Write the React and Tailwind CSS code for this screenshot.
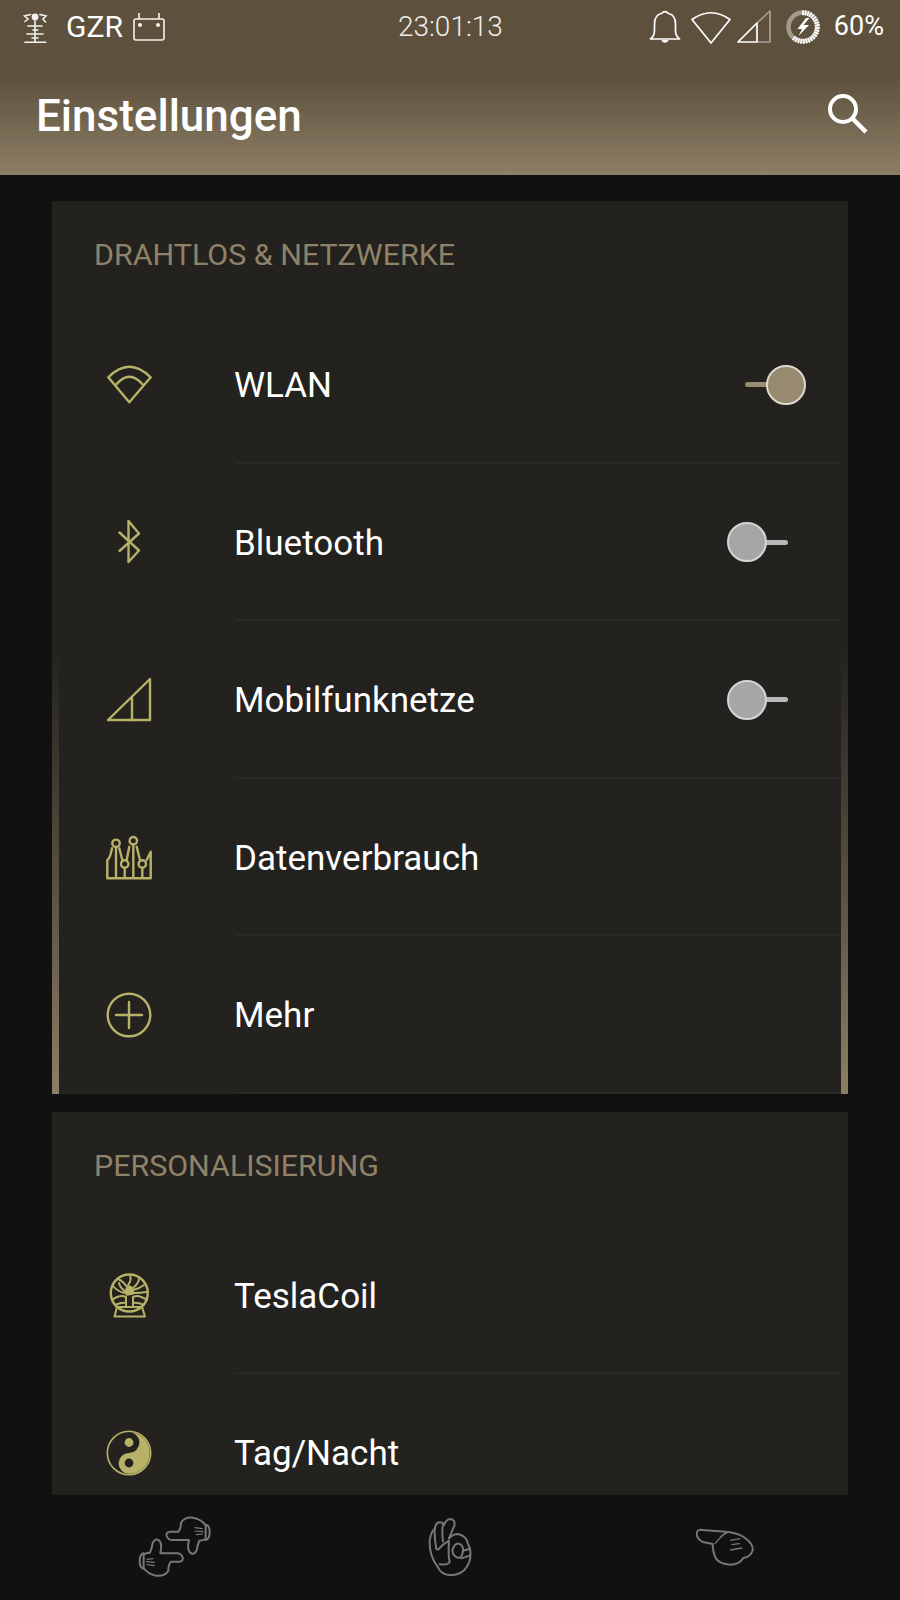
const OLIVE = "#b8b269";

function IconProps({ size = 46, children, vb = "0 0 46 46" }) {
  return (
    <svg width={size} height={size} viewBox={vb} fill="none" stroke={OLIVE} strokeWidth="2.4" strokeLinejoin="round" strokeLinecap="round">
      {children}
    </svg>
  );
}

const WifiIcon = () => (
  <IconProps>
    <path d="M23.3 40.3 L2.3 15.3 Q23.3 -5.9 44.7 15.3 Z" />
    <path d="M9.7 23 Q23.3 6.4 37.3 23" />
  </IconProps>
);
const BtIcon = () => (
  <IconProps>
    <path d="M13.5 13.5 L33 31.5 L22.5 43 L22.5 2 L33 14.5 L13.5 32" />
  </IconProps>
);
const SignalIcon = () => (
  <IconProps>
    <path d="M2 43 L44 2 L44 43 Z" />
    <path d="M26 21 L26 43" />
  </IconProps>
);
const DataIcon = () => (
  <IconProps>
    <circle cx="10" cy="9.3" r="3.7" />
    <circle cx="27.3" cy="6.7" r="3.7" />
    <circle cx="18.7" cy="30" r="3.7" />
    <circle cx="36.3" cy="30" r="3.7" />
    <path d="M1.3 44.3 L44.7 44.3 L44.7 17.7 L40.7 26 M1.3 44.3 L1.3 26 Q4 25 6 14.3 M13.3 14.3 L16.3 26 M10 13 L10 44 M27.3 10.5 L27.3 44 M23.3 12.7 L20.7 26 M30.7 12.7 L34 26 M18.7 34 L18.7 44 M36.3 34 L36.3 44" />
  </IconProps>
);
const PlusIcon = () => (
  <IconProps>
    <circle cx="23" cy="23" r="21.3" />
    <path d="M10 23 L36 23 M23 10 L23 36" />
  </IconProps>
);
const TeslaIcon = () => (
  <IconProps>
    <circle cx="23.3" cy="21" r="18.5" />
    <path d="M11 35 L8.5 44.5 L39 44.5 L36 35 Z" strokeWidth="2" />
    <path d="M6 28 Q14 22 20 25 M41 28 Q32 22 27 25 M20 25 L20 35 M27 25 L27 35 M9 33 Q16 30 20 31 M38 33 Q31 30 27 31" strokeWidth="2" />
    <path d="M20 17 L23 14 L27 16 L27 22 L20.5 23 Z" fill={OLIVE} strokeWidth="1.6" />
    <path d="M21 15 Q17 9 12 7 M13 11 Q14 16 20 20 M7 14 Q12 20 19 21 M22 13 Q26 8 24 3 M28 15 Q33 11 33 6 M27 18 Q33 17 38 13 M27 21 Q34 21 41 20" strokeWidth="1.9" />
  </IconProps>
);
const YinYangIcon = () => (
  <svg width="46" height="46" viewBox="0 0 46 46">
    <circle cx="23" cy="23" r="21.7" fill="none" stroke={OLIVE} strokeWidth="1.6" />
    <path d="M23 2.2 A20.8 20.8 0 0 1 23 43.8 A10.4 10.4 0 0 1 23 23 A10.4 10.4 0 0 0 23 2.2 Z" fill={OLIVE} />
    <circle cx="23" cy="12.5" r="4.4" fill={OLIVE} />
    <circle cx="23" cy="33" r="4.4" fill="#23221e" />
  </svg>
);

function Toggle({ on }) {
  return (
    <div className={on ? "relative w-[61px] h-[40px] mr-[42px]" : "relative w-[61px] h-[40px] mr-[60px]"}>
      <div className={on ? "absolute left-0 top-[17.5px] w-[30px] h-[5px] rounded-full bg-[#9a8c73]" : "absolute right-0 top-[17.5px] w-[30px] h-[5px] rounded-full bg-[#b8b8b8]"} />
      <div className={on ? "absolute right-0 top-0 w-[40px] h-[40px] rounded-full bg-[#978a70] border-[2px] border-[#dcd8cc]" : "absolute left-0 top-0 w-[40px] h-[40px] rounded-full bg-[#a6a6a6] border-[2px] border-[#d4d4d4]"} />
    </div>
  );
}

function Row({ icon, label, toggle, last }) {
  return (
    <div className="relative h-[157.5px] flex items-center">
      <div className="w-[183px] shrink-0 flex justify-start pl-[54px]">{icon}</div>
      <div className="flex-1 -ml-[1px] pt-[2px] text-white text-[35px] leading-none font-['Roboto',sans-serif]">{label}</div>
      {toggle !== undefined && <Toggle on={toggle} />}
      {!last && <div className="absolute left-[183px] right-[8px] bottom-0 h-[2px] bg-[#2a2925]" />}
    </div>
  );
}

function Card({ title, children, strips }) {
  return (
    <section className="relative bg-[#23221e] shrink-0">
      <div className="h-[105px] pl-[42px] pt-[36px] text-[30.4px] leading-[36px] text-[#8f8269] font-['Roboto',sans-serif]">{title}</div>
      {children}
      {strips && (
        <>
          <div className="absolute left-0 bottom-0 w-[7px] h-[445px] bg-gradient-to-b from-[#23221e] to-[#8d7f66]" />
          <div className="absolute right-0 bottom-0 w-[7px] h-[445px] bg-gradient-to-b from-[#23221e] to-[#8d7f66]" />
        </>
      )}
    </section>
  );
}

const TICKS = Array.from({ length: 22 }, (_, i) => i * 10.4);

function StatusBar() {
  return (
    <div className="h-[53px] flex items-center pl-[23px] text-white font-['Roboto',sans-serif]">
      <svg width="26" height="32" viewBox="0 0 26 32" fill="none" stroke="#f4f2ee" strokeWidth="1.6" strokeLinecap="round">
        <circle cx="12" cy="6" r="3.4" fill="#f4f2ee" stroke="none" />
        <path d="M7.5 3.5 L1.5 5 L5 8 L2 10.5 M17 3.5 L23 5 L20 8 L22.5 11 M12 10 L12 15 M5 15 L19 15 M10 19 L15 19 M12 15 L12 23 M4 23 L20 23 M9 27 L15 27 M12 23 L12 31 M2 31.3 L22.7 31.3" />
      </svg>
      <span className="ml-[17px] text-[30px] leading-none">GZR</span>
      <svg className="ml-[10px]" width="32" height="30" viewBox="0 0 32 30" fill="none" stroke="#f4f2ee" strokeWidth="1.6" strokeLinejoin="round">
        <rect x="1" y="7" width="30" height="21" rx="2" />
        <path d="M6 1 L6 7 M26 1 L26 7" />
        <circle cx="7" cy="13" r="2" fill="#f4f2ee" stroke="none" />
        <circle cx="25" cy="13" r="2" fill="#f4f2ee" stroke="none" />
      </svg>
      <span className="ml-[233px] text-[28px] leading-none font-light text-[#f0eee8]">23:01:13</span>
      <svg className="ml-[146px]" width="32" height="34" viewBox="0 0 32 34" fill="none" stroke="#fff" strokeWidth="1.7" strokeLinejoin="round">
        <path d="M1.5 29 Q5.5 26 5.5 20 L5.5 14 Q5.5 5 12.5 3.5 Q16 0 19.5 3.5 Q26.5 5 26.5 14 L26.5 20 Q26.5 26 30.5 29 Z" />
        <path d="M13 30 Q16 34 19 30" fill="#fff" />
      </svg>
      <svg className="ml-[9px]" width="42" height="36" viewBox="0 0 42 36" fill="none" stroke="#fff" strokeWidth="1.7" strokeLinejoin="round">
        <path d="M21 34 L2 10.5 Q21 -3 40 10.5 Z" />
      </svg>
      <svg className="ml-[4px]" width="36" height="36" viewBox="0 0 36 36" fill="none" strokeWidth="1.7" strokeLinejoin="round">
        <path d="M21 14 L34 2 L34 33 L21 33" stroke="#a89f90" />
        <path d="M21 14 L2 33 L21 33 Z" stroke="#fff" />
      </svg>
      <svg className="ml-[13px]" width="36" height="36" viewBox="0 0 36 36" fill="none">
        <circle cx="18" cy="18" r="14.5" stroke="#a39b8d" strokeWidth="4.5" />
        <g stroke="#fff" strokeWidth="1.8">
          {TICKS.map((a) => (
            <line key={a} x1="18" y1="1.2" x2="18" y2="6.2" transform={`rotate(${a} 18 18)`} />
          ))}
        </g>
        <path d="M21 9 L12.5 20 L17 20 L13.5 27 L24 16 L18.5 16 L24.5 9 Z" fill="#fff" />
      </svg>
      <span className="ml-[13px] text-[27px] leading-none">60%</span>
    </div>
  );
}

function Hand({ w, h, vb, children }) {
  return (
    <svg width={w} height={h} viewBox={vb} fill="none" stroke="#777777" strokeWidth="6" strokeLinecap="round" strokeLinejoin="round">
      {children}
    </svg>
  );
}

function FrameHalf(props) {
  return (
    <g {...props}>
      <path d="M206 97 L180 97 Q168 99 171 110 Q176 124 192 122 L238 122 Q234 140 236 150 Q241 165 252 163 Q262 158 263 142 L269 124 Q282 124 288 118 L288 78 Q276 60 250 55 Q224 53 214 70 Q214 88 206 97 Z" />
      <path d="M288 76 Q300 78 300 98 Q300 120 288 122" />
      <path d="M256 85 L278 88 M256 95 L280 97 M260 106 L278 104" strokeWidth="3.5" />
    </g>
  );
}

export default function App() {
  return (
    <div className="w-[900px] h-[1600px] bg-[#111111] flex flex-col overflow-hidden">
      <header className="h-[175px] shrink-0 bg-[linear-gradient(to_bottom,#5d513e_0%,#5d513e_44%,#8d7f66_100%)]">
        <StatusBar />
        <div className="flex items-center justify-between pl-[36px] pr-[30px] h-[122px]">
          <h1 className="text-white text-[44px] leading-none font-medium font-['Roboto',sans-serif] pt-[4px]">Einstellungen</h1>
          <svg width="44" height="44" viewBox="0 0 44 44" fill="none" stroke="#fff" strokeWidth="4">
            <circle cx="17" cy="17" r="13" />
            <path d="M26 26 L40 40" strokeWidth="4.5" />
          </svg>
        </div>
      </header>
      <main className="h-[1320px] shrink-0 overflow-hidden px-[52px] pt-[26px] flex flex-col gap-[18px]">
        <Card title="DRAHTLOS & NETZWERKE" strips>
          <Row icon={<WifiIcon />} label="WLAN" toggle={true} />
          <Row icon={<BtIcon />} label="Bluetooth" toggle={false} />
          <Row icon={<SignalIcon />} label="Mobilfunknetze" toggle={false} />
          <Row icon={<DataIcon />} label="Datenverbrauch" />
          <Row icon={<PlusIcon />} label="Mehr" />
        </Card>
        <Card title="PERSONALISIERUNG">
          <Row icon={<TeslaIcon />} label="TeslaCoil" />
          <Row icon={<YinYangIcon />} label="Tag/Nacht" />
        </Card>
      </main>
      <nav className="flex-1 grid grid-cols-3 px-[37.5px] items-center">
        <div className="flex justify-center -mt-[2px]">
          <Hand w={74} h={62} vb="85 50 222 186">
            <FrameHalf />
            <FrameHalf transform="rotate(180 195 142)" />
          </Hand>
        </div>
        <div className="flex justify-center -mt-[2px]">
          <Hand w={44} h={60} vb="955 55 132 178">
            <path d="M985 205 Q958 170 960 125 Q964 98 975 90 Q978 70 990 70 Q1000 70 1003 78 Q1010 60 1022 60 Q1038 62 1034 80 L1018 118" />
            <path d="M1000 76 Q996 100 1000 128 M975 90 Q974 120 980 150" />
            <path d="M1018 118 Q1030 105 1045 105 Q1072 112 1075 135 Q1084 150 1082 165 Q1084 190 1065 212 Q1045 230 1020 228 Q994 226 985 205" />
            <path d="M1018 125 Q1000 135 985 152 M1018 125 Q1015 165 1020 190 Q1010 200 990 195" />
            <path d="M1028 155 Q1034 132 1048 134 Q1062 140 1060 155 Q1058 178 1044 176 Q1030 172 1028 155 Z" />
            <path d="M1060 155 L1078 150 M1055 178 L1080 170" />
          </Hand>
        </div>
        <div className="flex justify-center -mt-[2px]">
          <Hand w={58} h={38} vb="108 118 174 114">
            <path d="M158 166 L128 160 Q110 150 110 135 Q112 120 128 124 L205 130 Q240 135 255 148 Q280 165 278 185 Q272 205 250 208 Q238 228 210 228 Q180 226 168 210 Q158 190 158 166 Z" />
            <path d="M205 130 Q190 135 178 150 L165 165 M212 155 L240 150 M212 184 L245 178 M216 168 L238 165" strokeWidth="4" />
          </Hand>
        </div>
      </nav>
    </div>
  );
}
